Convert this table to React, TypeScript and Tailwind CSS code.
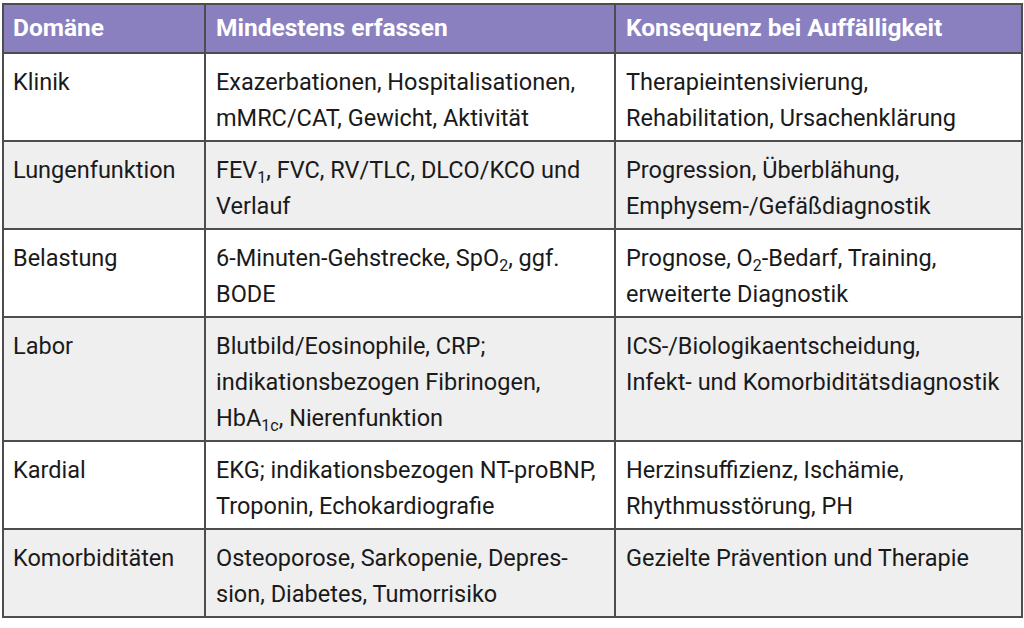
import type { ReactNode } from 'react';

type Row = {
  domain: string;
  measure: ReactNode[];
  consequence: ReactNode[];
};

const Sub = ({ children }: { children: ReactNode }) => (
  <sub className="text-[16px] relative top-[5px] align-baseline leading-none">{children}</sub>
);

const rows: Row[] = [
  {
    domain: 'Klinik',
    measure: ['Exazerbationen, Hospitalisationen,', 'mMRC/CAT, Gewicht, Aktivität'],
    consequence: ['Therapieintensivierung,', 'Rehabilitation, Ursachenklärung'],
  },
  {
    domain: 'Lungenfunktion',
    measure: [<>FEV<Sub>1</Sub>, FVC, RV/TLC, DLCO/KCO und</>, 'Verlauf'],
    consequence: ['Progression, Überblähung,', 'Emphysem-/Gefäßdiagnostik'],
  },
  {
    domain: 'Belastung',
    measure: [<>6-Minuten-Gehstrecke, SpO<Sub>2</Sub>, ggf.</>, 'BODE'],
    consequence: [<>Prognose, O<Sub>2</Sub>-Bedarf, Training,</>, 'erweiterte Diagnostik'],
  },
  {
    domain: 'Labor',
    measure: [
      'Blutbild/Eosinophile, CRP;',
      'indikationsbezogen Fibrinogen,',
      <>HbA<Sub>1c</Sub>, Nierenfunktion</>,
    ],
    consequence: ['ICS-/Biologikaentscheidung,', 'Infekt- und Komorbiditätsdiagnostik'],
  },
  {
    domain: 'Kardial',
    measure: ['EKG; indikationsbezogen NT-proBNP,', 'Troponin, Echokardiografie'],
    consequence: ['Herzinsuffizienz, Ischämie,', 'Rhythmusstörung, PH'],
  },
  {
    domain: 'Komorbiditäten',
    measure: ['Osteoporose, Sarkopenie, Depres-', 'sion, Diabetes, Tumorrisiko'],
    consequence: ['Gezielte Prävention und Therapie'],
  },
];

function Lines({ items }: { items: ReactNode[] }) {
  return (
    <>
      {items.map((line, i) => (
        <div key={i} className="whitespace-nowrap">
          {line}
        </div>
      ))}
    </>
  );
}

export default function App() {
  return (
    <div className="w-[1024px] h-[628px] bg-white pt-[3px] pl-[2px] font-['Roboto',sans-serif] text-[#1a1a1a]">
      <div className="w-[1021px] border-2 border-[#4d4d4d] grid grid-cols-[200px_410px_407px]">
        {/* header */}
        <div className="bg-[#8a80c0] h-[49px] pl-[9px] flex items-center text-white font-bold text-[24.5px] border-b-2 border-[#4d4d4d]">
          Domäne
        </div>
        <div className="bg-[#8a80c0] h-[49px] pl-[10px] flex items-center text-white font-bold text-[24.5px] border-b-2 border-l-2 border-[#4d4d4d]">
          Mindestens erfassen
        </div>
        <div className="bg-[#8a80c0] h-[49px] pl-[10px] flex items-center text-white font-bold text-[24.5px] border-b-2 border-l-2 border-[#4d4d4d]">
          Konsequenz bei Auffälligkeit
        </div>

        {rows.map((row, idx) => {
          const striped = idx % 2 === 1;
          const last = idx === rows.length - 1;
          const bg = striped ? 'bg-[#efefef]' : 'bg-white';
          const bottom = last ? '' : 'border-b-2 border-[#4d4d4d]';
          return (
            <div key={row.domain} className="contents">
              <div className={`${bg} ${bottom} pl-[9px] pt-[10px] pb-[4px] text-[23.5px] leading-[36px]`}>
                {row.domain}
              </div>
              <div className={`${bg} ${bottom} border-l-2 border-l-[#4d4d4d] pl-[10px] pt-[10px] pb-[4px] text-[23.5px] leading-[36px]`}>
                <Lines items={row.measure} />
              </div>
              <div className={`${bg} ${bottom} border-l-2 border-l-[#4d4d4d] pl-[10px] pt-[10px] pb-[4px] text-[23.5px] leading-[36px]`}>
                <Lines items={row.consequence} />
              </div>
            </div>
          );
        })}
      </div>
    </div>
  );
}
